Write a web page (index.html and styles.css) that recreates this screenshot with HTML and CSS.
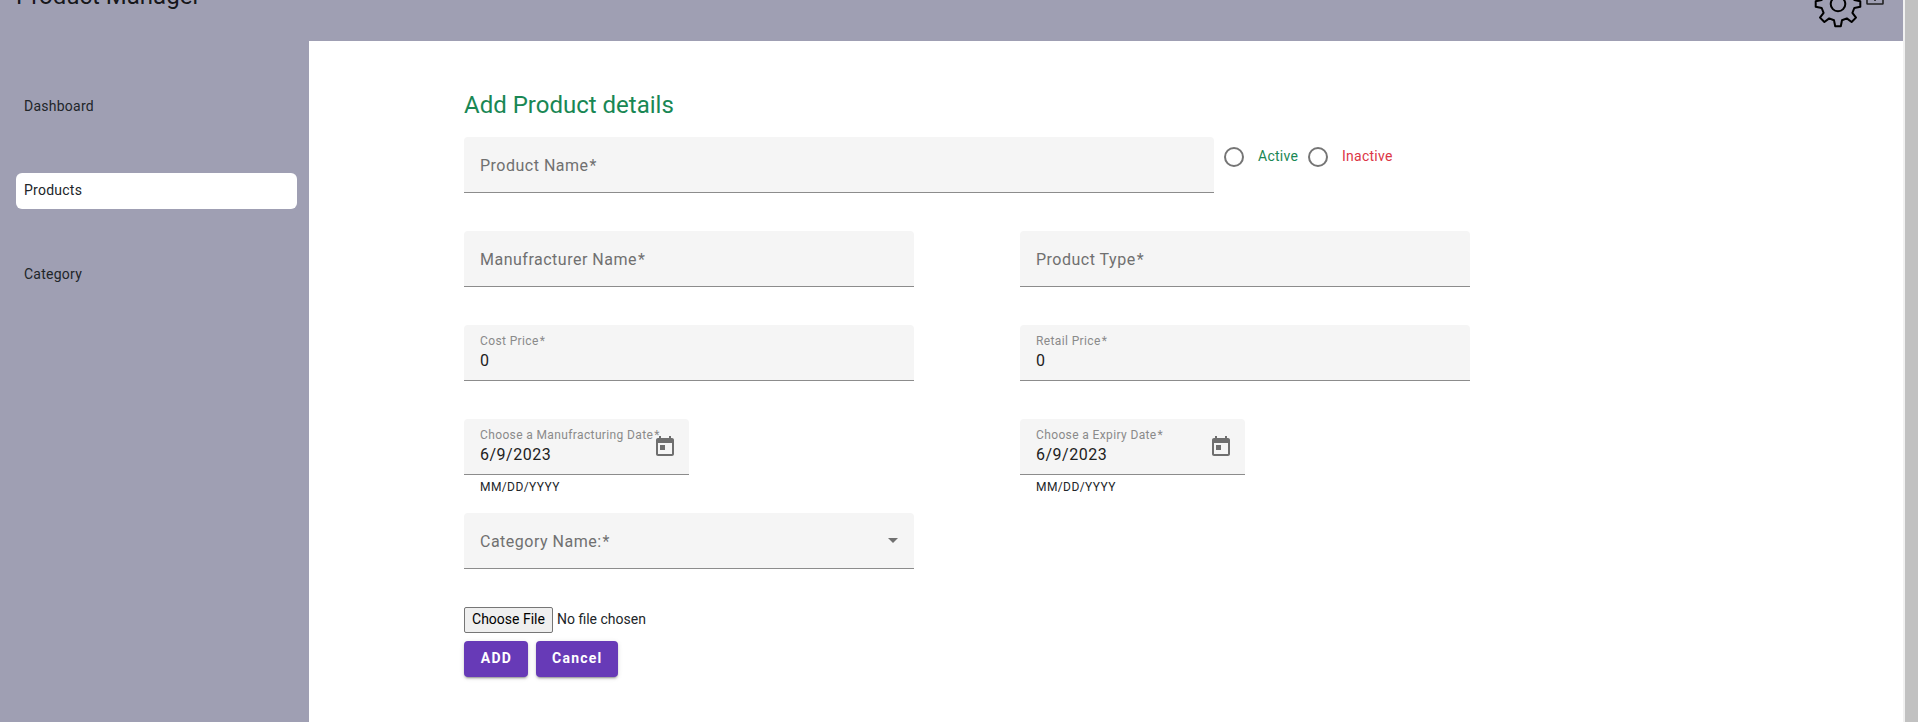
FILE: index.html
```html
<!DOCTYPE html>
<html lang="en">
<head>
<meta charset="utf-8">
<title>Product Manager</title>
<link rel="stylesheet" href="styles.css">
</head>
<body>
<div class="app">
  <header class="toolbar">
    <h1 class="brand">Product Manager</h1>
    <div class="tools">
      <svg class="gear" width="50" height="50" viewBox="-25 -25 50 50" fill="none" stroke="#000" stroke-width="2" stroke-linejoin="round">
        <circle r="7.3"/>
        <path d="M-4-16.300L-2.800-22.300H2.800L4-16.300L8.800-14.400L13.600-18L18-13.600L14.400-8.800L16.300-4L22.300-2.800V2.800L16.300 4L14.400 8.800L18 13.600L13.600 18L8.800 14.400L4 16.300L2.800 22.300H-2.800L-4 16.300L-8.800 14.400L-13.600 18L-18 13.600L-14.400 8.800L-16.300 4L-22.300 2.800V-2.800L-16.300-4L-14.400-8.800L-18-13.600L-13.600-18L-8.800-14.400Z"/>
      </svg>
      <svg class="box" width="18" height="24" viewBox="0 0 18 24" fill="none" stroke="#222" stroke-width="1.6"><rect x="1" y="1" width="16" height="22" rx=".5"/><path d="M9 17v3"/></svg>
    </div>
  </header>
  <div class="body">
    <nav class="sidebar">
      <a class="nav-item">Dashboard</a>
      <a class="nav-item active">Products</a>
      <a class="nav-item">Category</a>
    </nav>
    <main class="content">
      <h2 class="title">Add Product details</h2>
      <div class="row name-row">
        <div class="field wide"><span class="label">Product Name<i>*</i></span></div>
        <div class="radios">
          <label class="radio"><span class="ring"></span><span class="green">Active</span></label>
          <label class="radio"><span class="ring"></span><span class="red">Inactive</span></label>
        </div>
      </div>
      <div class="row">
        <div class="field"><span class="label">Manufracturer Name<i>*</i></span></div>
        <div class="field"><span class="label">Product Type<i>*</i></span></div>
      </div>
      <div class="row">
        <div class="field filled"><span class="float">Cost Price<i>*</i></span><span class="value">0</span></div>
        <div class="field filled"><span class="float">Retail Price<i>*</i></span><span class="value">0</span></div>
      </div>
      <div class="row">
        <div class="cell">
          <div class="field date">
            <div class="filled"><span class="float">Choose a Manufracturing Date<i>*</i></span><span class="value">6/9/2023</span></div>
            <svg class="cal" width="24" height="24" viewBox="0 0 24 24"><path d="M19 3h-1V1h-2v2H8V1H6v2H5c-1.110 0-1.990.9-1.990 2L3 19c0 1.100.89 2 2 2h14c1.100 0 2-.9 2-2V5c0-1.100-.9-2-2-2zm0 16H5V8h14v11zM7 10h5v5H7z"/></svg>
          </div>
          <div class="hint">MM/DD/YYYY</div>
        </div>
        <div class="cell">
          <div class="field date">
            <div class="filled"><span class="float">Choose a Expiry Date<i>*</i></span><span class="value">6/9/2023</span></div>
            <svg class="cal" width="24" height="24" viewBox="0 0 24 24"><path d="M19 3h-1V1h-2v2H8V1H6v2H5c-1.110 0-1.990.9-1.990 2L3 19c0 1.100.89 2 2 2h14c1.100 0 2-.9 2-2V5c0-1.100-.9-2-2-2zm0 16H5V8h14v11zM7 10h5v5H7z"/></svg>
          </div>
          <div class="hint">MM/DD/YYYY</div>
        </div>
      </div>
      <div class="row">
        <div class="field select"><span class="label">Category Name:<i>*</i></span><svg class="arrow" width="10" height="5" viewBox="0 0 10 5"><path d="M0 0h10L5 5z"/></svg></div>
      </div>
      <div class="file"><button class="choose">Choose File</button><span class="chosen">No file chosen</span></div>
      <div class="actions"><button class="btn add">ADD</button><button class="btn">Cancel</button></div>
    </main>
  </div>
</div>
<div class="scrollbar"></div>
</body>
</html>
```

FILE: styles.css
```css
* { box-sizing: border-box; }
body {
  margin: 0;
  height: 722px;
  display: flex;
  overflow: hidden;
  background: #fff;
  color: #212529;
  font: 14px/20px Roboto, sans-serif;
}
.app { flex: 1; display: flex; flex-direction: column; }
.toolbar {
  height: 41px;
  flex: none;
  display: flex;
  justify-content: space-between;
  align-items: flex-start;
  padding: 0 18px 0 16px;
  background: #9f9fb3;
  overflow: hidden;
}
.brand {
  margin: -20px 0 0;
  font-size: 24px;
  line-height: 32px;
  font-weight: 400;
  letter-spacing: 0;
  color: rgba(0, 0, 0, .87);
}
.tools { display: flex; align-items: flex-start; gap: 3px; }
.gear { margin-top: -21px; }
.box { margin-top: -19px; margin-right: 1px; }
.body { flex: 1; display: flex; }
.sidebar {
  width: 309px;
  padding: 48px 12px 0 16px;
  display: flex;
  flex-direction: column;
  gap: 48px;
  background: #9f9fb3;
}
.nav-item {
  height: 36px;
  padding: 7px 8px;
  border-radius: 6px;
  letter-spacing: .25px;
}
.nav-item.active { background: #fff; }
.content { flex: 1; padding: 48px 0 0 155px; }
.title {
  margin: 0 0 16px;
  font-size: 24px;
  line-height: 32px;
  font-weight: 400;
  letter-spacing: 0;
  color: #198754;
}
.row { display: flex; gap: 106px; height: 94px; }
.name-row { gap: 0; }
.field {
  width: 450px;
  height: 56px;
  padding: 0 16px;
  display: flex;
  align-items: center;
  background: #f5f5f5;
  border-bottom: 1px solid #8c8c8c;
  border-radius: 4px 4px 0 0;
}
.wide { width: 750px; }
.label { padding-top: 2px; font-size: 16px; letter-spacing: .5px; color: #707070; }
.label i, .float i { margin-left: 1px; font-style: normal; }
.filled { display: flex; flex-direction: column; align-items: flex-start; justify-content: flex-start; }
.field.filled { padding-top: 8px; }
.float { font-size: 12px; line-height: 17px; letter-spacing: .375px; color: #8a8a8a; white-space: nowrap; }
.value { font-size: 16px; line-height: 21px; letter-spacing: .5px; color: #212121; }
.cell { width: 450px; }
.date { width: 225px; padding: 8px 12px 0 16px; align-items: flex-start; }
.date .filled { width: 173px; }
.cal { flex: none; margin-top: 8px; fill: #6f6f6f; }
.hint { padding: 2px 16px 0; font-size: 12px; line-height: 20px; letter-spacing: .4px; }
.select { justify-content: space-between; }
.arrow { fill: #707070; }
.radios { display: flex; padding-top: 10px; }
.radio { display: flex; align-items: center; height: 20px; letter-spacing: .25px; width: 84px; padding-left: 10px; gap: 14px; }
.ring { width: 20px; height: 20px; flex: none; border: 2px solid #757575; border-radius: 50%; }
.green, .red { padding-bottom: 2px; }
.green { color: #198754; }
.red { color: #dc3545; }
.file { display: flex; align-items: center; gap: 4px; height: 26px; letter-spacing: 0; }
.chosen { padding-bottom: 2px; }
.choose {
  width: 89px;
  height: 26px;
  padding: 0 0 2px;
  border: 1px solid #767676;
  border-radius: 2px;
  background: #efefef;
  font: 14px/20px Roboto, sans-serif;
  color: #000;
}
.actions { display: flex; gap: 8px; margin-top: 8px; }
.btn {
  height: 36px;
  padding: 0 15px 0 16px;
  border: 0;
  border-radius: 4px;
  background: #673ab7;
  color: #fff;
  font: 700 14px/34px Roboto, sans-serif;
  letter-spacing: 1.25px;
  padding-bottom: 2px;
  box-shadow: 0 3px 1px -2px rgba(0, 0, 0, .2), 0 2px 2px rgba(0, 0, 0, .14), 0 1px 5px rgba(0, 0, 0, .12);
}
.add { width: 64px; }
.scrollbar { width: 15px; flex: none; background: #c1c1c1; border-left: 2px solid #f1f1f1; }
```
